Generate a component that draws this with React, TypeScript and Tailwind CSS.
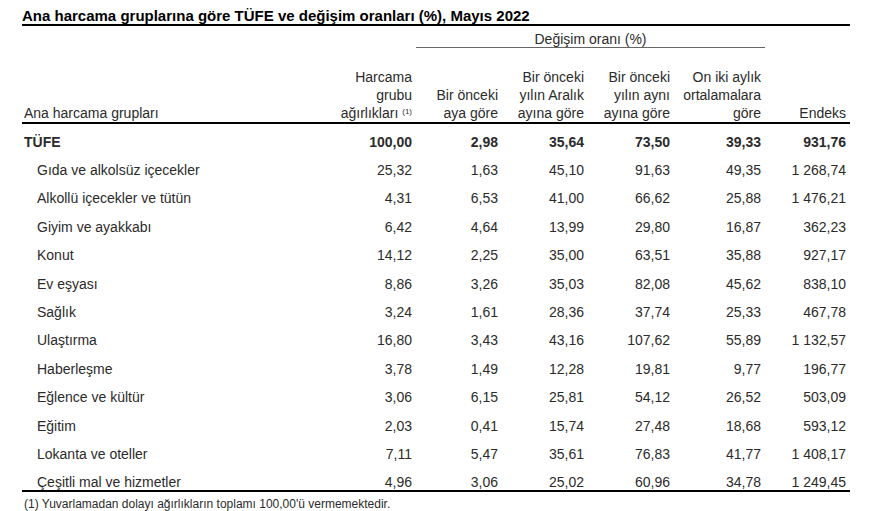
import React from "react";

const rows: [string, string, string, string, string, string, string][] = [
    ["Gıda ve alkolsüz içecekler", "25,32", "1,63", "45,10", "91,63", "49,35", "1 268,74"],
    ["Alkollü içecekler ve tütün", "4,31", "6,53", "41,00", "66,62", "25,88", "1 476,21"],
    ["Giyim ve ayakkabı", "6,42", "4,64", "13,99", "29,80", "16,87", "362,23"],
    ["Konut", "14,12", "2,25", "35,00", "63,51", "35,88", "927,17"],
    ["Ev eşyası", "8,86", "3,26", "35,03", "82,08", "45,62", "838,10"],
    ["Sağlık", "3,24", "1,61", "28,36", "37,74", "25,33", "467,78"],
    ["Ulaştırma", "16,80", "3,43", "43,16", "107,62", "55,89", "1 132,57"],
    ["Haberleşme", "3,78", "1,49", "12,28", "19,81", "9,77", "196,77"],
    ["Eğlence ve kültür", "3,06", "6,15", "25,81", "54,12", "26,52", "503,09"],
    ["Eğitim", "2,03", "0,41", "15,74", "27,48", "18,68", "593,12"],
    ["Lokanta ve oteller", "7,11", "5,47", "35,61", "76,83", "41,77", "1 408,17"],
    ["Çeşitli mal ve hizmetler", "4,96", "3,06", "25,02", "60,96", "34,78", "1 249,45"],
];

const num = "text-right pr-[4px]";

export default function App() {
    return (
        <div className="w-[880px] h-[511px] bg-white pl-[22px] pt-[7px] text-[#2b2b2b] font-['Liberation_Sans',Arial,sans-serif] text-[14px]">
            <div className="w-[828px] border-b-2 border-black text-[15px] font-bold leading-[17px] text-black">
                Ana harcama gruplarına göre TÜFE ve değişim oranları (%), Mayıs 2022
            </div>

            <table className="table-fixed border-collapse w-[828px]">
                <colgroup>
                    <col className="w-[308px]" />
                    <col className="w-[86px]" />
                    <col className="w-[86px]" />
                    <col className="w-[86px]" />
                    <col className="w-[86px]" />
                    <col className="w-[91px]" />
                    <col className="w-[85px]" />
                </colgroup>
                <thead>
                    <tr>
                        <th colSpan={2}></th>
                        <th colSpan={4} className="border-b border-[#666] text-center font-normal leading-[16px] pt-[5px] pb-0">
                            Değişim oranı (%)
                        </th>
                        <th></th>
                    </tr>
                    <tr className="border-b-2 border-black align-bottom leading-[18px]">
                        <th className="text-left font-normal pl-[2px]">Ana harcama grupları</th>
                        <th className={`${num} font-normal pt-[20px]`}>
                            Harcama
                            <br />
                            grubu
                            <br />
                            ağırlıkları <sup className="text-[8px]">(1)</sup>
                        </th>
                        <th className={`${num} font-normal`}>
                            Bir önceki
                            <br />
                            aya göre
                        </th>
                        <th className={`${num} font-normal`}>
                            Bir önceki
                            <br />
                            yılın Aralık
                            <br />
                            ayına göre
                        </th>
                        <th className={`${num} font-normal`}>
                            Bir önceki
                            <br />
                            yılın aynı
                            <br />
                            ayına göre
                        </th>
                        <th className={`${num} font-normal`}>
                            On iki aylık
                            <br />
                            ortalamalara
                            <br />
                            göre
                        </th>
                        <th className={`${num} font-normal`}>Endeks</th>
                    </tr>
                </thead>
                <tbody className="border-b-2 border-black leading-[16px]">
                    <tr className="h-[33.4px] font-bold">
                        <td className="pl-[2px] pt-[5px]">TÜFE</td>
                        <td className={`${num} pt-[5px]`}>100,00</td>
                        <td className={`${num} pt-[5px]`}>2,98</td>
                        <td className={`${num} pt-[5px]`}>35,64</td>
                        <td className={`${num} pt-[5px]`}>73,50</td>
                        <td className={`${num} pt-[5px]`}>39,33</td>
                        <td className={`${num} pt-[5px]`}>931,76</td>
                    </tr>
                    {rows.map((r, ri) => {
                        const last = ri === rows.length - 1;
                        return (
                            <tr key={r[0]} className={last ? "h-[22px] align-top" : "h-[28.4px]"}>
                                <td className={last ? "pl-[15px] pt-[6px]" : "pl-[15px]"}>{r[0]}</td>
                                {r.slice(1).map((v, i) => (
                                    <td key={i} className={last ? `${num} pt-[6px]` : num}>
                                        {v}
                                    </td>
                                ))}
                            </tr>
                        );
                    })}
                </tbody>
            </table>

            <div className="pl-[2px] pt-[6px] text-[12px] leading-[13px]">
                (1) Yuvarlamadan dolayı ağırlıkların toplamı 100,00'ü vermemektedir.
            </div>
        </div>
    );
}
